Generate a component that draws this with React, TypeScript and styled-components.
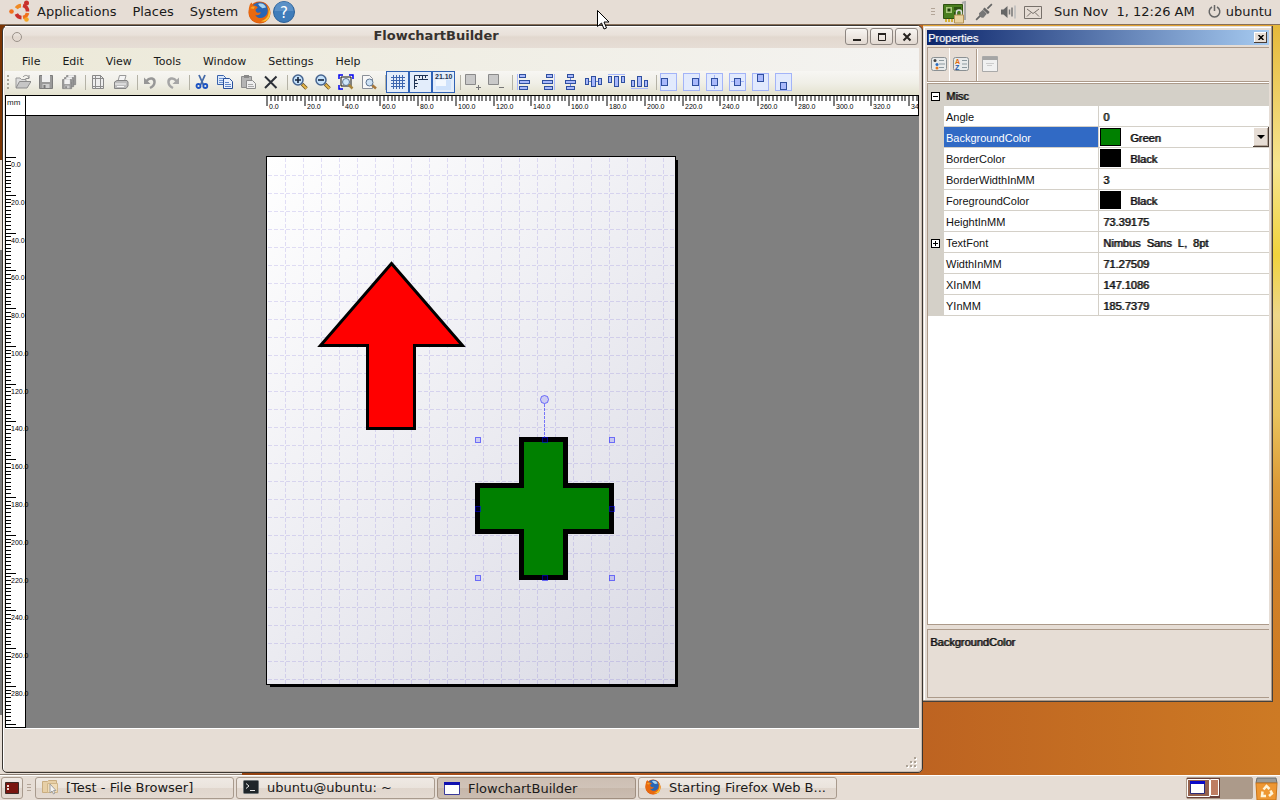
import React from "react";
import styled, { createGlobalStyle, css } from "styled-components";

const GlobalStyle = createGlobalStyle`
  * { box-sizing: border-box; }
  body { margin: 0; background: #c46c22; color: #1a1a1a; font-family: "DejaVu Sans", sans-serif; font-size: 13px; }
  button, select { font: inherit; color: inherit; margin: 0; padding: 0; border: 0; background: none; }
  svg { display: block; flex: none; }
`;

const ui = '"Liberation Sans", Arial, sans-serif';

/* ---------- desktop ---------- */

const Screen = styled.div`
  display: flex;
  flex-direction: column;
  min-height: 100vh;
`;

const Panel = styled.header`
  display: flex;
  align-items: center;
  height: 25px;
  background: #e6ddd5;
  border-bottom: 1px solid #87705a;
  white-space: pre;
`;

const PanelMenu = styled.nav`
  display: flex;
  align-items: center;
  gap: 16px;
  padding: 0 10px 2px 9px;
`;

const PanelButton = styled.button`
  display: flex;
  align-items: center;
  gap: 5px;
`;

const Tray = styled.div`
  display: flex;
  align-items: center;
  justify-content: space-between;
  width: 111px;
  margin-left: auto;
  margin-right: 12px;
`;

const Session = styled.div`
  display: flex;
  align-items: center;
  gap: 13px;
  padding: 0 8px 2px 0;
`;

const Clock = styled.time`
  min-width: 138px;
`;

const Grip = styled.span`
  flex: none;
  width: 4px;
  height: 8px;
  background: repeating-linear-gradient(#b3a598 0 1px, transparent 1px 3px);
`;

const Desktop = styled.main`
  position: relative;
  flex: 1;
  display: flex;
  align-items: stretch;
  padding: 0 7px 2px 2px;
  background:
    linear-gradient(#e5b83a 0, #f6e48f 140px, #f0d23d 230px, #edd68a 290px, #e9c35c 390px, #dc9a38 460px, #d18228 540px, transparent 660px) right top / 7px 100% no-repeat,
    linear-gradient(#e0a030, #e0a030) right top / 357px 2px no-repeat,
    linear-gradient(90deg, #7a3504, #a34a17 30%, #bd6321 72%, #cd7a24);
`;

const BackWindow = styled.div`
  position: absolute;
  left: 0;
  top: 135px;
  bottom: 0;
  width: 242px;
  background: linear-gradient(#e6ddd5 90px, #777 90px, #777 555px, #e6ddd5 555px);
  border-bottom: 1px solid #8c7f74;
`;

const Pointer = styled.svg`
  position: absolute;
  left: 596px;
  top: 9px;
  z-index: 5;
`;

/* ---------- main window ---------- */

const Window = styled.section`
  position: relative;
  display: flex;
  flex-direction: column;
  flex: 1;
  min-width: 0;
  padding: 0 3px 0 2px;
  background: #e6ddd5;
  border: 1px solid #3a3531;
  border-radius: 6px 6px 5px 5px;
  box-shadow: inset 1px 1px 0 #fff, inset -1px -1px 0 #c9bcb0;
`;

const TitleBar = styled.div`
  display: flex;
  align-items: center;
  height: 22px;
  padding: 0 1px 1px 7px;
  background: linear-gradient(#fff 0 1px, #eee8e2 1px, #e9e1da 9px, #e2d8cf 11px, #e6ddd5);
`;

const WindowTitle = styled.h1`
  flex: 1;
  margin: 0;
  padding: 0 0 2px 5px;
  font-size: 13px;
  line-height: 16px;
  font-weight: bold;
  text-align: center;
  color: #36322f;
`;

const WindowMenu = styled.button`
  width: 10px;
  height: 10px;
  border: 1px solid #9b928a;
  border-radius: 50%;
`;

const WindowButtons = styled.div`
  display: flex;
  gap: 2px;
`;

const FrameButton = styled.button`
  display: grid;
  place-items: center;
  width: 23px;
  height: 17px;
  border: 1px solid #8d8681;
  border-radius: 3px;
  background: linear-gradient(#f8f5f2, #e2d9d1);
`;

const MenuBar = styled.nav`
  display: flex;
  height: 23px;
  padding-left: 7px;
  background: linear-gradient(90deg, #ece9d8, #f4f3f1);
  font-size: 11px;
`;

const MenuItem = styled.button`
  padding: 3px 12px 0 10px;
`;

const ToolBar = styled.div`
  display: flex;
  align-items: center;
  height: 24px;
  padding: 0 0 2px 2px;
  background: linear-gradient(#f7f6f3, #f0efe7 50%, #e4e2cf);
`;

const ToolGrip = styled.span`
  width: 4px;
  height: 15px;
  background: repeating-linear-gradient(#a9a69a 0 2px, transparent 2px 4px) left / 2px 100% no-repeat;
`;

const ToolButton = styled.button<{ $on?: boolean }>`
  display: grid;
  place-items: center;
  flex: none;
  width: 23px;
  height: 22px;
  ${(p) => p.$on && css`
    background: #e3edfb;
    box-shadow: inset 0 0 0 1px #2f62b5;
  `}
`;

const Separator = styled.span`
  flex: none;
  width: 6px;
  height: 15px;
  border-right: 1px solid #b4b2a6;
`;

const Editor = styled.div`
  flex: 1;
  display: grid;
  grid-template-columns: 21px minmax(0, 1fr);
  grid-template-rows: 21px minmax(0, 1fr);
  background: #808080;
  border-bottom: 1px solid #fff;
`;

const UnitBox = styled.div`
  border: 1px solid #000;
  background: #fff;
  font: 8px/14px ${ui};
  padding-left: 1px;
`;

const TopRuler = styled.svg`
  width: 100%;
  height: 21px;
  background: #fff;
  border: solid #000;
  border-width: 1px 1px 1px 0;
  overflow: hidden;
  font: 7px ${ui};
`;

const SideRuler = styled.svg`
  width: 21px;
  height: 100%;
  background: #fff;
  border: solid #000;
  border-width: 0 1px 1px 1px;
  overflow: visible;
  font: 7px ${ui};
`;

const Workspace = styled.div`
  display: grid;
  place-items: center;
  min-height: 560px;
  padding: 0 3px 3px 0;
`;

const Sheet = styled.div`
  border: 1px solid #000;
  background: linear-gradient(135deg, #fff, #dadae5);
  box-shadow: 3px 3px 0 -1px #000;
`;

const StatusBar = styled.footer`
  display: flex;
  align-items: flex-end;
  justify-content: flex-end;
  height: 43px;
  padding: 0 2px 4px;
`;

/* ---------- properties window ---------- */

const Tool = styled.aside`
  position: relative;
  display: flex;
  flex-direction: column;
  width: 350px;
  flex: none;
  height: calc(100% - 72px);
  min-height: 600px;
  margin-top: 1px;
  padding: 4px 3px 3px 4px;
  background: #e6ddd5;
  border: solid #45403c;
  border-width: 0 1px 1px 0;
  box-shadow: inset -1px -1px 0 #ac9a8a, inset 1px 1px 0 #e6ddd5, inset 2px 2px 0 #fff;
  font: 11px/14px ${ui};
  color: #111;
`;

const ToolColumn = styled.div`
  display: flex;
`;

const ToolTitle = styled.div`
  display: flex;
  align-items: center;
  justify-content: space-between;
  height: 15px;
  padding: 0 2px 0 1px;
  background: linear-gradient(90deg, #0b246a, #a6caf0);
  color: #fff;
`;

const emphasis = css`
  text-shadow: 1px 0 0 rgba(0, 0, 0, 0.8);
`;

const Strong = styled.span`
  ${emphasis}
`;

const ToolHeading = styled.h2`
  margin: 0;
  font-size: 11px;
  font-weight: normal;
  text-shadow: 1px 0 0 rgba(255, 255, 255, 0.4);
`;

const CloseButton = styled.button`
  display: grid;
  place-items: center;
  width: 13px;
  height: 11px;
  background: #e6ddd5;
  box-shadow: inset -1px -1px 0 #4a3c34, inset 1px 1px 0 #fff;
`;

const PropertyTools = styled.div`
  display: flex;
  height: 35px;
  margin-top: 2px;
  border: solid #ac9a8a;
  border-width: 1px 0 1px 1px;
  box-shadow: 0 1px 0 #fff;
`;

const PropertyTool = styled.button<{ $on?: boolean }>`
  display: grid;
  place-items: center;
  width: 22px;
  padding-bottom: 1px;
  border-right: 1px solid ${(p) => (p.$on ? "#fff" : "transparent")};
`;

const PropertyDivider = styled.span`
  width: 2px;
  margin: 1px 1px 0 4px;
  border-left: 1px solid #ac9a8a;
  border-right: 1px solid #fff;
`;

const PropertyList = styled.div`
  flex: 1;
  margin-top: 1px;
  border: 1px solid #ac9a8a;
  border-right: 0;
  background: #fff;
`;

const Table = styled.table`
  width: 100%;
  table-layout: fixed;
  border-collapse: separate;
  border-spacing: 0;
`;

const Gutter = styled.td`
  width: 16px;
  padding: 2px 0 0 3px;
  background: #d4d0c8;
`;

const Category = styled.th`
  height: 22px;
  padding: 2px 2px 0;
  background: #d4d0c8;
  font-weight: normal;
  text-align: left;
`;

const Name = styled.th<{ $selected?: boolean }>`
  width: 155px;
  height: 21px;
  padding: 2px 0 0 2px;
  border: solid #d4d0c8;
  border-width: 0 1px 1px 0;
  font-weight: normal;
  text-align: left;
  ${(p) => p.$selected && css`
    background: #316ac5;
    color: #fff;
  `}
`;

const Value = styled.td`
  height: 21px;
  padding: 0;
  border-bottom: 1px solid #d4d0c8;
  white-space: pre;
`;

const Text = styled.span`
  padding: 2px 0 0 4px;
  display: block;
  ${emphasis}
`;

const Choice = styled.div`
  display: flex;
  align-items: center;
  height: 20px;
  padding-left: 1px;
`;

const Swatch = styled.span<{ $color: string }>`
  width: 21px;
  height: 18px;
  margin-right: 9px;
  border: 1px solid #000;
  background: ${(p) => p.$color};
`;

const ColorName = styled.span`
  padding-top: 2px;
  ${emphasis}
`;

const ColorSelect = styled.select`
  flex: 1;
  min-width: 0;
  appearance: none;
  padding-top: 2px;
  ${emphasis}
`;

const DropButton = styled.button`
  display: grid;
  place-items: center;
  width: 16px;
  height: 20px;
  background: #e6ddd5;
  box-shadow: inset -1px -1px 0 #4a3c34, inset 1px 1px 0 #fff, inset -2px -2px 0 #b3a598;
`;

const Expander = styled.button`
  display: grid;
  place-items: center;
  width: 9px;
  height: 9px;
  border: 1px solid #000;
  background: #fff;
`;

const Help = styled.div`
  height: 69px;
  margin-top: 4px;
  padding: 5px 2px;
  border: 1px solid #ac9a8a;
  border-right: 0;
`;

/* ---------- bottom panel ---------- */

const TaskBar = styled.footer`
  display: flex;
  align-items: center;
  gap: 2px;
  height: 25px;
  padding: 0 2px 0 1px;
  background: #e6ddd5;
  border-top: 1px solid #fff;
  overflow: hidden;
`;

const raised = css`
  border: 1px solid #a89a8d;
  border-radius: 3px;
  background: linear-gradient(#efe9e4, #eae3dc 50%, #e0d6cd 50%, #e4dad1);
`;

const ShowDesktop = styled.button`
  display: grid;
  place-items: center;
  width: 22px;
  height: 22px;
  ${raised}
`;

const Tasks = styled.div`
  display: flex;
  flex: 1;
  gap: 2px;
  min-width: 0;
`;

const Task = styled.button<{ $active?: boolean }>`
  display: flex;
  align-items: center;
  gap: 8px;
  flex: 0 1 199px;
  min-width: 0;
  height: 22px;
  padding: 0 6px 2px;
  white-space: nowrap;
  ${raised}
  ${(p) => p.$active && css`
    border-color: #a08f80;
    background: linear-gradient(#cdbfb3, #d0c3b8 50%, #c6b7aa 50%, #cbbdb1);
    padding-bottom: 0;
  `}
`;

const Grips = styled.span`
  padding: 0 2px;
`;

const Switcher = styled.div`
  display: flex;
  width: 67px;
  height: 22px;
  border: 1px solid #ac9a8a;
  border-radius: 2px;
  background: #ac9a8a;
`;

/* ---------- icons ---------- */

type IconProps = { children: React.ReactNode; size?: number };
const Icon = ({ children, size = 16 }: IconProps) => (
  <svg width={size} height={size} viewBox="0 0 16 16" fill="none" aria-hidden="true">
    {children}
  </svg>
);

const Firefox = ({ size = 16 }: { size?: number }) => (
  <Icon size={size}>
    <circle cx="8" cy="8" r="7.6" fill="#d9580e" />
    <circle cx="8.2" cy="6.6" r="5.8" fill="#2a66b4" />
    <path d="M7 2c3-1 5 .5 5.500 2.500L10 5 8 3.500z" fill="#a9d5f0" />
    <path d="M1 3.500C1.200 2 2 1.500 2.600 1l.8 2.200C5 3 6 3.600 6.800 4.600L5.200 6c0 2 2 2.600 3.800 1.800C8 10.500 5.500 10 5 9.500 6.500 13 12 12.500 13.500 8.500c.5-2 .2-4-.8-5.500 3 2.500 3.500 6.500 1.500 9.500C11 16.500 4 16 1.500 11.500.3 9 .2 6 1 3.500z" fill="#e8690f" />
    <path d="M13.300 3.500c2.300 3.500 1 9.500-4.300 10.500 4.500 1.500 7-3 6.300-6.500-.3-1.700-1-3-2-4z" fill="#fbc132" />
    <path d="M1.600 5c.8-1.200 2-1.400 3.200-1L4 5.500z" fill="#f9a325" />
  </Icon>
);

const blue = "#2f4f9f";
const box = "#a9b9fb";
const Bar = ({ x, y, w, h }: { x: number; y: number; w: number; h: number }) => (
  <rect x={x + 0.5} y={y + 0.5} width={w - 1} height={h - 1} fill={box} stroke={blue} />
);
const Placed = ({ x, y, guide }: { x: number; y: number; guide?: string }) => (
  <svg width="17" height="18" viewBox="0 0 17 18" aria-hidden="true">
    <rect x="0.5" y="0.5" width="16" height="17" fill="#e2eafd" stroke="#a3b4f8" />
    {guide && <path d={guide} stroke="#a3b4f8" />}
    <Bar x={x} y={y} w={7} h={8} />
  </svg>
);

const Lens = ({ sign }: { sign: string }) => (
  <Icon>
    <path d="M10 10l4.500 4.500" stroke="#6b5321" strokeWidth="3.500" />
    <path d="M10.500 10.500l4 4" stroke="#e6b84a" strokeWidth="2" />
    <circle cx="6" cy="6" r="5" fill="#c4e1fa" stroke="#46648f" strokeWidth="1.500" />
    <path d={sign} stroke="#15243d" strokeWidth="1.600" />
  </Icon>
);

const Floppy = () => (
  <g>
    <path d="M1.500 1.500h13v13h-13z" fill="#9a9a9a" stroke="#7d7d7d" />
    <path d="M4 1h8v7H4z" fill="#f1f1f1" />
    <path d="M4.500 10h7v4h-7z" fill="#ccc" />
    <path d="M5.500 11h2v3h-2z" fill="#777" />
  </g>
);

const tools: { label: string; on?: boolean; icon: React.ReactNode }[][] = [
  [
    { label: "Open", icon: <Icon><path d="M1 13.500V4h4l1.500 1.500H11V8" fill="#ddd" stroke="#999" /><path d="M1 14l3.500-6.500H16L12 14z" fill="#c6c6c6" stroke="#8b8b8b" /><path d="M8 3c2-2.500 5-2 6 1m0-3v3.500h-3.500" stroke="#8f8f8f" /></Icon> },
    { label: "Save", icon: <Icon><Floppy /></Icon> },
    { label: "Save all", icon: <Icon><g transform="translate(4.500 .5) scale(.7)"><Floppy /></g><g transform="translate(2.500 2.500) scale(.7)"><Floppy /></g><g transform="translate(.5 4.500) scale(.7)"><Floppy /></g></Icon> },
  ],
  [
    { label: "Page setup", icon: <Icon><path d="M2.500 1.500h8l3 3v10h-11z" fill="#eee" stroke="#888" /><path d="M5.500 1v14M10.500 1v14M2 4.500h12M2 12.500h12" stroke="#8c8c8c" /></Icon> },
    { label: "Print", icon: <Icon><path d="M5 7l1.500-5.500H13L11.500 7" fill="#f5f5f5" stroke="#999" /><path d="M1.500 8L4 6.500h10l1 1.500v4l-2 2.500H1.500z" fill="#bdbdbd" stroke="#858585" /><path d="M2 10h11M4 12.500h7" stroke="#f7f7f7" /></Icon> },
  ],
  [
    { label: "Undo", icon: <Icon><path d="M4.500 7C8 2.500 13 4.500 12.500 8.500 12.300 11 10 13 8 14" stroke="#979797" strokeWidth="2.500" /><path d="M2 3.500V10h6.500z" fill="#979797" /></Icon> },
    { label: "Redo", icon: <Icon><path d="M11.500 7C8 2.500 3 4.500 3.500 8.500 3.700 11 6 13 8 14" stroke="#a6a6a6" strokeWidth="2.500" /><path d="M14 3.500V10H7.500z" fill="#a6a6a6" /></Icon> },
  ],
  [
    { label: "Cut", icon: <Icon><path d="M5 1l4.500 10M11 1L6.500 11" stroke="#456aa8" strokeWidth="1.800" /><circle cx="4.500" cy="12" r="2" stroke="#1c53c2" strokeWidth="1.800" /><circle cx="11.300" cy="12" r="2" stroke="#1c53c2" strokeWidth="1.800" /></Icon> },
    { label: "Copy", icon: <Icon><path d="M.5 1.500h6l2 2v7h-8z" fill="#dce9fb" stroke="#3a63ac" /><path d="M2 4.500h5M2 6.500h4M2 8.500h4" stroke="#6f94d2" /><path d="M6.500 4.500h6l3 3v7h-9z" fill="#e9f1fd" stroke="#274f9b" /><path d="M8 8.500h4M8 10.500h6M8 12.500h6" stroke="#5f86c9" /></Icon> },
    { label: "Paste", icon: <Icon><path d="M1.500 2.500h10v11h-10z" fill="#b4b4b4" stroke="#8c8c8c" /><path d="M4 1h5v3H4z" fill="#888" /><path d="M6.500 6.500h6l3 3v5h-9z" fill="#eee" stroke="#8c8c8c" /><path d="M8 10.500h5M8 12.500h6" stroke="#aaa" /></Icon> },
    { label: "Delete", icon: <Icon><path d="M2 2.500l11.500 11.500M13.500 2.500L2 14" stroke="#2c3038" strokeWidth="2" /></Icon> },
  ],
  [
    { label: "Zoom in", icon: <Lens sign="M3 6h6M6 3v6" /> },
    { label: "Zoom out", icon: <Lens sign="M3 6h6" /> },
    { label: "Zoom to fit", icon: <Icon><path d="M1 5V1h4M11 1h4v4M1 11v4h4" stroke="#0000f0" strokeWidth="1.500" /><path d="M3 3h10v9H3z" stroke="#111" /><path d="M10 10l4.500 4.500" stroke="#a7843b" strokeWidth="2.500" /><circle cx="8" cy="8" r="3.500" fill="#cfe6fa" stroke="#5d7592" /></Icon> },
    { label: "Zoom page", icon: <Icon><path d="M1.500 1.500h7l3 3v10h-10z" fill="#f8f8f8" stroke="#8a8f98" /><path d="M11 11l4 3.500" stroke="#a7773b" strokeWidth="2.500" /><circle cx="8.500" cy="8.500" r="3.500" fill="#cfe3f5" stroke="#5d7592" /></Icon> },
  ],
  [
    { label: "Show grid", on: true, icon: <Icon><path d="M3.500 1v14M6.500 1v14M9.500 1v14M12.500 1v14M1 3.500h14M1 6.500h14M1 9.500h14M1 12.500h14" stroke="#3d66b0" /></Icon> },
    { label: "Show rulers", on: true, icon: <Icon><path d="M1 15V1h14v4H5v10z" fill="#e9eef6" /><path d="M1.500 15V1.500H15M3 5v1.500M1 6.500h3M1 9.500h4M1 12.500h3M6.500 1v3M9.500 1v4M12.500 1v3M5 5.500h10" stroke="#1f3354" /></Icon> },
    { label: "Show coordinates", on: true, icon: <svg width="19" height="18" viewBox="0 0 19 18" aria-hidden="true"><path d="M2 7h15v10H2z" fill="#cfe2fb" /><path d="M2 7h10v6H2z" fill="#f3f8fe" /><text x="1" y="6" fontSize="7" fontWeight="bold" fontFamily="Liberation Sans, sans-serif" fill="#22344f">21.10</text></svg> },
  ],
  [
    { label: "Add", icon: <Icon><path d="M.5.500h10v10H.5z" fill="#c9c9c9" stroke="#8a8a8a" /><path d="M13.500 11v5M11 13.500h5" stroke="#777" /></Icon> },
    { label: "Remove", icon: <Icon><path d="M.5.500h10v10H.5z" fill="#c9c9c9" stroke="#8a8a8a" /><path d="M11 13.500h5" stroke="#777" /></Icon> },
  ],
  [
    { label: "Align left", icon: <Icon><path d="M.5 0v16" stroke="#a9b9fb" /><Bar x={2} y={0} w={7} h={4} /><Bar x={2} y={6} w={11} h={4} /><Bar x={2} y={12} w={9} h={4} /></Icon> },
    { label: "Align right", icon: <Icon><path d="M14.500 0v16" stroke="#a9b9fb" /><Bar x={6} y={0} w={7} h={4} /><Bar x={2} y={6} w={11} h={4} /><Bar x={4} y={12} w={9} h={4} /></Icon> },
    { label: "Align centers", icon: <Icon><path d="M7.500 0v16" stroke="#6d86dd" /><Bar x={4} y={0} w={7} h={4} /><Bar x={2} y={6} w={11} h={4} /><Bar x={3} y={12} w={9} h={4} /></Icon> },
    { label: "Align middles", icon: <svg width="17" height="16" viewBox="0 0 17 16" aria-hidden="true"><path d="M0 7.500h17" stroke="#6d86dd" /><Bar x={0} y={4} w={4} h={7} /><Bar x={6} y={2} w={5} h={11} /><Bar x={13} y={4} w={4} h={7} /></svg> },
    { label: "Align tops", icon: <svg width="17" height="16" viewBox="0 0 17 16" aria-hidden="true"><path d="M0 .5h17" stroke="#a9b9fb" /><Bar x={0} y={2} w={4} h={7} /><Bar x={6} y={2} w={5} h={11} /><Bar x={13} y={2} w={4} h={7} /></svg> },
    { label: "Align bottoms", icon: <svg width="17" height="16" viewBox="0 0 17 16" aria-hidden="true"><path d="M0 14.500h17" stroke="#a9b9fb" /><Bar x={0} y={6} w={4} h={7} /><Bar x={6} y={2} w={5} h={11} /><Bar x={13} y={6} w={4} h={7} /></svg> },
  ],
  [
    { label: "Dock left", icon: <Placed x={1} y={5} /> },
    { label: "Dock right", icon: <Placed x={9} y={5} /> },
    { label: "Center horizontally", icon: <Placed x={5} y={5} guide="M8.500 2v14" /> },
    { label: "Center vertically", icon: <Placed x={5} y={5} guide="M2 8.500h13" /> },
    { label: "Dock top", icon: <Placed x={5} y={1} /> },
    { label: "Dock bottom", icon: <Placed x={5} y={9} /> },
  ],
];

const TrayIcons = () => (
  <>
    <Grip />
    <svg width="25" height="23" viewBox="0 0 25 23" aria-label="Drivers" role="img">
      <path d="M1.500 3.500h19v14h-19z" fill="#4a7d1e" stroke="#2f5210" />
      <path d="M4 6h6v6H4z" fill="#a9c77a" /><path d="M5.500 7.500h3v3h-3z" fill="#22400c" />
      <path d="M12 6h7v3h-7zM12 11h4v3h-4z" fill="#2c5010" />
      <path d="M3 19.500h9" stroke="#d6b23a" strokeWidth="3" strokeDasharray="2 1" />
      <path d="M20 2l3-1v18" stroke="#a9a9a9" strokeWidth="2" fill="none" />
      <path d="M14.500 14v-2.500a2.500 2.500 0 0 1 5 0V14" stroke="#ddd" strokeWidth="1.500" fill="none" />
      <path d="M12.500 14h9v8h-9z" fill="#e9d2a0" stroke="#b49354" />
    </svg>
    <Icon size={18}><path d="M1 15l4-4M11 5l4-4" stroke="#666" strokeWidth="1.500" /><path d="M3.500 9l3.500-3 3.500 3.500L7.500 13c-2 .8-4-1.500-4-4z" fill="#777" /><path d="M7 5.500l1.500-1.500 4.500 4-1.500 2z" fill="#666" /></Icon>
    <Icon><path d="M1 5.500h2.500L7.500 2v12l-4-3.500H1z" fill="#666" /><path d="M9.500 5.500v5M12 3.500v9" stroke="#777" strokeWidth="1.500" /><path d="M15 1.500v13" stroke="#bbb" strokeWidth="1.500" /></Icon>
    <svg width="18" height="13" viewBox="0 0 18 13" aria-label="Mail" role="img"><path d="M.5.500h17v12H.5zM3 3l6 4.500L15 3M3 10.500L7 6.500M15 10.500l-4-4" stroke="#77706a" fill="none" /></svg>
  </>
);

/* ---------- rulers and drawing ---------- */

const PX_PER_MM = 1.889;
const marks = (endMm: number) => Array.from({ length: endMm / 2 + 1 }, (_, i) => i * 2);

const HorizontalRuler = () => (
  <TopRuler aria-label="Horizontal ruler">
    <svg x="50%" overflow="visible">
      <g transform="translate(-205 0)">
        {marks(344).map((mm) => {
          const x = Math.round(mm * PX_PER_MM);
          const major = mm % 20 === 0;
          return (
            <g key={mm}>
              <path d={`M${x} 0v${major ? 10 : 5}`} stroke="#000" />
              {major && <text x={x + 2} y="13">{mm.toFixed(1)}</text>}
            </g>
          );
        })}
      </g>
    </svg>
  </TopRuler>
);

const VerticalRuler = () => (
  <SideRuler aria-label="Vertical ruler">
    <svg y="50%" overflow="visible">
      <g transform="translate(0 -264)">
        {marks(300).map((mm) => {
          const y = Math.round(mm * PX_PER_MM);
          const major = mm % 20 === 0;
          return (
            <g key={mm}>
              <path d={`M0 ${y}h${major ? 10 : 5}`} stroke="#000" />
              {major && mm < 300 && <text x="5" y={y + 9}>{mm.toFixed(1)}</text>}
            </g>
          );
        })}
      </g>
    </svg>
  </SideRuler>
);

const columns = Array.from({ length: 22 }, (_, i) => (i + 1) * 18 + 0.5);
const rows = Array.from({ length: 29 }, (_, i) => (i + 1) * 18 + 0.5);
const handles = [
  [208.5, 280.5], [275.5, 280.5], [342.5, 280.5],
  [208.5, 349.5], [342.5, 349.5],
  [208.5, 418.5], [275.5, 418.5], [342.5, 418.5],
];

const Drawing = () => (
  <svg width="408" height="527" viewBox="0 0 408 527" role="img" aria-label="Flowchart page">
    <g stroke="#5a46d2" strokeOpacity="0.17" strokeDasharray="4 2">
      {columns.map((x) => <path key={x} d={`M${x} 1V527`} />)}
      {rows.map((y) => <path key={y} d={`M1 ${y}H408`} />)}
    </g>
    <path d="M124.500 106.500L195.500 188.500H147.500V271.500H100.500V188.500H53.500Z" fill="#f00" stroke="#000" strokeWidth="3" />
    <path d="M254.500 282.500H298.500V328.500H344.500V374.500H298.500V420.500H254.500V374.500H210.500V328.500H254.500Z" fill="#008000" stroke="#000" strokeWidth="5" />
    <g fill="#00f" fillOpacity="0.13" stroke="#00f" strokeOpacity="0.5">
      {handles.map(([x, y]) => <rect key={`${x} ${y}`} x={x} y={y} width="5" height="5" />)}
      <circle cx="277.500" cy="242.500" r="4" />
      <path d="M277.500 247V281" strokeDasharray="3 1" />
    </g>
  </svg>
);

/* ---------- properties ---------- */

type Property = { name: string; value: string; color?: string; selected?: boolean; group?: boolean };
const properties: Property[] = [
  { name: "Angle", value: "0" },
  { name: "BackgroundColor", value: "Green", color: "#008000", selected: true },
  { name: "BorderColor", value: "Black", color: "#000" },
  { name: "BorderWidthInMM", value: "3" },
  { name: "ForegroundColor", value: "Black", color: "#000" },
  { name: "HeightInMM", value: "73.39175" },
  { name: "TextFont", value: "Nimbus  Sans  L,  8pt", group: true },
  { name: "WidthInMM", value: "71.27509" },
  { name: "XInMM", value: "147.1086" },
  { name: "YInMM", value: "185.7379" },
];

const Plus = ({ open }: { open?: boolean }) => (
  <Expander aria-label={open ? "Collapse" : "Expand"}>
    <svg width="5" height="5" viewBox="0 0 5 5"><path d={open ? "M0 2.500h5" : "M0 2.500h5M2.500 0v5"} stroke="#000" /></svg>
  </Expander>
);

const PropertyRow = ({ name, value, color, selected, group }: Property) => (
  <tr>
    <Gutter>{group && <Plus />}</Gutter>
    <Name scope="row" $selected={selected}>{name}</Name>
    <Value>
      {color ? (
        <Choice>
          <Swatch $color={color} />
          {selected ? (
            <>
              <ColorSelect aria-label={name} defaultValue={value}>
                <option>{value}</option>
              </ColorSelect>
              <DropButton aria-label="Choose colour">
                <svg width="8" height="4" viewBox="0 0 8 4"><path d="M0 0h8L4 4z" fill="#000" /></svg>
              </DropButton>
            </>
          ) : (
            <ColorName>{value}</ColorName>
          )}
        </Choice>
      ) : (
        <Text>{value}</Text>
      )}
    </Value>
  </tr>
);

const Properties = () => (
  <Tool aria-label="Properties">
    <ToolTitle>
      <ToolHeading>Properties</ToolHeading>
      <CloseButton aria-label="Close">
        <svg width="6" height="5" viewBox="0 0 6 5"><path d="M.5 0l5 5M5.500 0l-5 5" stroke="#000" strokeWidth="1.500" /></svg>
      </CloseButton>
    </ToolTitle>
    <PropertyTools>
      <PropertyTool $on aria-label="Categorized">
        <Icon><rect x=".5" y="1.500" width="15" height="13" rx="2" fill="#e8eaea" stroke="#8a9093" /><path d="M8 4.500h5M8 8h6M8 11.500h5" stroke="#8d9aa0" /><circle cx="4" cy="4.500" r="1.500" fill="#444" /><circle cx="6" cy="8.500" r="1.500" fill="#2a6cc0" /><circle cx="6" cy="12" r="1.500" fill="#e87a20" /></Icon>
      </PropertyTool>
      <PropertyTool aria-label="Alphabetical">
        <Icon><rect x=".5" y="1.500" width="15" height="13" rx="2" fill="#e8eaea" stroke="#8a9093" /><path d="M9 4.500h5M9 8h5M9 11.500h5" stroke="#8d9aa0" /><text x="2" y="7.500" fontSize="7" fontWeight="bold" fill="#e06a10">A</text><text x="2" y="14" fontSize="7" fontWeight="bold" fill="#2458a8">Z</text></Icon>
      </PropertyTool>
      <PropertyDivider />
      <PropertyTool aria-label="Property pages">
        <Icon><path d="M.5.500h15v15H.5z" fill="#f0f0f0" stroke="#a9a9a9" /><path d="M1 1h14v3H1z" fill="#a5a5a5" /><path d="M4 7.500h8M5 9.500h5" stroke="#ccc" /></Icon>
      </PropertyTool>
    </PropertyTools>
    <PropertyList>
      <Table>
        <colgroup>
          <col width="16" />
          <col width="155" />
          <col />
        </colgroup>
        <tbody>
          <tr>
            <Gutter><Plus open /></Gutter>
            <Category colSpan={2} scope="colgroup"><Strong>Misc</Strong></Category>
          </tr>
          {properties.map((p) => <PropertyRow key={p.name} {...p} />)}
        </tbody>
      </Table>
    </PropertyList>
    <Help><Strong>BackgroundColor</Strong></Help>
  </Tool>
);

/* ---------- app ---------- */

export default function App() {
  return (
    <Screen>
      <GlobalStyle />
      <Panel>
        <PanelMenu>
          <PanelButton>
            <svg width="23" height="22" viewBox="0 0 23 22" aria-hidden="true">
              <path d="M7.300 8.200A6 6 0 0 1 12 5.600" stroke="#f08a24" strokeWidth="3.600" fill="none" />
              <path d="M14 5.500a6 6 0 0 1 4.500 6" stroke="#c9302c" strokeWidth="3.600" fill="none" />
              <path d="M18.500 13a6 6 0 0 1-4.500 4.600" stroke="#f0701c" strokeWidth="3.600" fill="none" />
              <path d="M12.500 17.600a6 6 0 0 1-5.200-3.600" stroke="#c9302c" strokeWidth="3.600" fill="none" />
              <circle cx="2.500" cy="11.500" r="2.300" fill="#f0701c" />
              <circle cx="17.500" cy="3" r="2.500" fill="#c9302c" />
              <circle cx="17.500" cy="19.500" r="2.300" fill="#f5a623" />
            </svg>
            Applications
          </PanelButton>
          <PanelButton>Places</PanelButton>
          <PanelButton>System</PanelButton>
        </PanelMenu>
        <PanelButton aria-label="Firefox"><Firefox size={23} /></PanelButton>
        <PanelButton aria-label="Help">
          <svg width="24" height="22" viewBox="0 0 24 22" aria-hidden="true">
            <circle cx="13" cy="11" r="10.500" fill="#3f7cba" stroke="#2e6299" />
            <path d="M3.500 10a9.500 9.500 0 0 1 19 0z" fill="#6c9fd0" fillOpacity="0.6" />
            <text x="13" y="16.500" textAnchor="middle" fontSize="15" fill="#fff">?</text>
          </svg>
        </PanelButton>
        <Tray><TrayIcons /></Tray>
        <Session>
          <Clock>Sun Nov  1, 12:26 AM</Clock>
          <PanelButton>
            <svg width="13" height="14" viewBox="0 0 13 14" fill="none" stroke="#666" strokeWidth="1.500" aria-hidden="true"><path d="M4 3a5.300 5.300 0 1 0 5 0M6.500 1v6" /></svg>
            ubuntu
          </PanelButton>
        </Session>
      </Panel>

      <Desktop>
        <BackWindow />
        <Window aria-label="FlowchartBuilder">
          <TitleBar>
            <WindowMenu aria-label="Window menu" />
            <WindowTitle>FlowchartBuilder</WindowTitle>
            <WindowButtons>
              <FrameButton aria-label="Minimize"><svg width="10" height="10" viewBox="0 0 10 10"><path d="M1 8h8" stroke="#26221f" strokeWidth="2" /></svg></FrameButton>
              <FrameButton aria-label="Maximize"><svg width="10" height="10" viewBox="0 0 10 10"><path d="M1.500 2v6.500h7V2" stroke="#26221f" fill="none" /><path d="M1 2h8" stroke="#26221f" strokeWidth="2" /></svg></FrameButton>
              <FrameButton aria-label="Close"><svg width="10" height="10" viewBox="0 0 10 10"><path d="M1.500 1.500l7 7M8.500 1.500l-7 7" stroke="#26221f" strokeWidth="2" /></svg></FrameButton>
            </WindowButtons>
          </TitleBar>
          <MenuBar>
            {["File", "Edit", "View", "Tools", "Window", "Settings", "Help"].map((m) => <MenuItem key={m}>{m}</MenuItem>)}
          </MenuBar>
          <ToolBar role="toolbar">
            <ToolGrip />
            {tools.map((group, i) => (
              <React.Fragment key={i}>
                {i > 0 && <Separator />}
                {group.map((t) => <ToolButton key={t.label} $on={t.on} aria-label={t.label}>{t.icon}</ToolButton>)}
              </React.Fragment>
            ))}
          </ToolBar>
          <Editor>
            <UnitBox>mm</UnitBox>
            <HorizontalRuler />
            <VerticalRuler />
            <Workspace>
              <Sheet><Drawing /></Sheet>
            </Workspace>
          </Editor>
          <StatusBar>
            <svg width="11" height="11" viewBox="0 0 11 11" aria-hidden="true">
              <path d="M8 0h2v2H8zM4 4h2v2H4zM8 4h2v2H8zM0 8h2v2H0zM4 8h2v2H4zM8 8h2v2H8z" fill="#fff" transform="translate(1 1)" />
              <path d="M8 0h2v2H8zM4 4h2v2H4zM8 4h2v2H8zM0 8h2v2H0zM4 8h2v2H4zM8 8h2v2H8z" fill="#aca296" />
            </svg>
          </StatusBar>
        </Window>
        <ToolColumn>
          <Properties />
        </ToolColumn>
      </Desktop>

      <TaskBar>
        <ShowDesktop aria-label="Show desktop">
          <svg width="14" height="14" viewBox="0 0 14 14"><path d="M.5 1.500h13v11H.5z" fill="#7a150f" stroke="#3b2a26" /><path d="M2 4h2v2H2zM2 7h2v2H2z" fill="#f0dcd6" /></svg>
        </ShowDesktop>
        <Grips><Grip as="div" /></Grips>
        <Tasks>
          <Task>
            <Icon><path d="M.5 2.500h5l1-1h8v12H.5z" fill="#e7cfa6" stroke="#c9ad80" /><path d="M5.500 4.500h10v9h-10z" fill="#f0dcb8" stroke="#d0b68a" /><path d="M8 5v9l2-2 1.500 3 1.500-1-1.500-2.500H14z" fill="#f4f4f4" stroke="#9f9f9f" /></Icon>
            [Test - File Browser]
          </Task>
          <Task>
            <Icon><rect x=".5" y="1.500" width="15" height="13" rx="1" fill="#20262a" stroke="#6f7577" /><path d="M3 4.500l3 2.500-3 2.500M7 11.500h5" stroke="#e6e6e6" /></Icon>
            ubuntu@ubuntu: ~
          </Task>
          <Task $active>
            <Icon><path d="M.5 2.500h15v12H.5z" fill="#fff" stroke="#3a3a9a" /><path d="M0 2h16v3H0z" fill="#1010b0" /></Icon>
            FlowchartBuilder
          </Task>
          <Task>
            <Firefox />
            Starting Firefox Web B...
          </Task>
        </Tasks>
        <Switcher aria-label="Workspace switcher">
          <svg width="33" height="20" viewBox="0 0 33 20">
            <path d="M0 0h33v20H0z" fill="#6b4038" />
            <path d="M.5 1.500h22v17H.5z" fill="#94604c" stroke="#fff" />
            <path d="M23.500 1.500h8v16h-8z" fill="#bf7d62" stroke="#fff" />
            <path d="M3.500 3.500h14v12h-14z" fill="#fff" stroke="#2a2a78" />
            <path d="M3 3h15v3H3z" fill="#0a0ac8" />
          </svg>
        </Switcher>
        <svg width="23" height="23" viewBox="0 0 23 23" role="img" aria-label="Trash">
          <path d="M2 1h19l1 5H1z" fill="#9b9b98" stroke="#6d6d6a" />
          <path d="M1 6h21l-1 17H2z" fill="#ee9733" stroke="#c87418" />
          <path d="M8.500 12.500l3-3.500 3 3M15.500 13.500l1.500 3-3 2.500M11 19H7l.5-4.500" stroke="#fff4d8" strokeWidth="2.500" fill="none" />
        </svg>
      </TaskBar>

      <Pointer width="14" height="22" viewBox="0 0 14 22" aria-hidden="true">
        <path d="M1.500 1.500v16l4-3.500 2.500 6 2.500-1-2.500-6h5z" fill="#fff" stroke="#000" />
      </Pointer>
    </Screen>
  );
}
